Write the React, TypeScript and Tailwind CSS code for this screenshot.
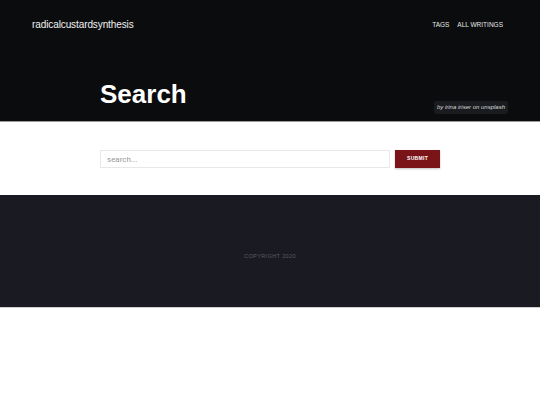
export default function App() {
  return (
    <div className="w-[540px] min-h-[405px] bg-white font-['Liberation_Sans',Arial,sans-serif]">
      {/* hero header */}
      <header className="h-[122px] bg-[#0b0c0e] border-b border-[#9a9a9a] flex flex-col">
        <nav className="flex items-center justify-between pl-[32px] pr-[37px] pt-[17px]">
          <span className="text-[10px] text-[#f2f2f2] tracking-[-0.1px]">radicalcustardsynthesis</span>
          <div className="flex gap-[8px] text-[6.5px] uppercase text-[#e6e6e6]">
            <span>Tags</span>
            <span>All writings</span>
          </div>
        </nav>
        <div className="flex items-end justify-between pl-[100px] pr-[32px] mt-auto pb-[7px]">
          <h1 className="text-[26px] font-bold text-white leading-none pb-[7px]">Search</h1>
          <span className="text-[6px] italic text-[#d8d8d8] bg-[#1a1b1f] px-[3px] py-[2px] rounded-[2px]">
            by irina iriser on unsplash
          </span>
        </div>
      </header>

      {/* search form */}
      <main className="h-[73px] flex items-start pt-[28px] pl-[100px]">
        <input
          className="w-[290px] h-[18px] border border-[#e8e8e8] px-[6px] text-[8px] text-[#555] placeholder:text-[#9a9a9a] outline-none font-['Roboto',sans-serif]"
          placeholder="search..."
        />
        <button className="ml-[5px] w-[45px] h-[18px] bg-[#7b1419] text-white text-[5px] font-bold uppercase tracking-[0.3px] shadow-[0_1px_2px_rgba(0,0,0,0.25)]">
          Submit
        </button>
      </main>

      {/* footer */}
      <footer className="h-[113px] bg-[#1a1b22] border-b border-[#d0d0d0] flex items-center justify-center pt-[10px]">
        <span className="text-[5.5px] uppercase tracking-[0.4px] text-[#5b5c62]">Copyright 2020</span>
      </footer>
    </div>
  );
}
